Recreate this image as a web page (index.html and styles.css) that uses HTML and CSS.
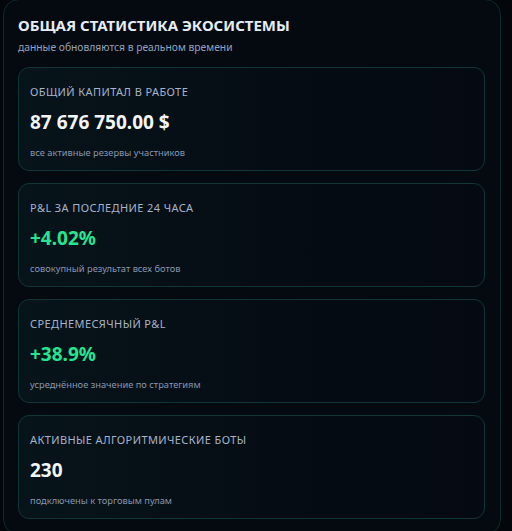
FILE: index.html
```html
<!DOCTYPE html>
<html lang="ru">

<head>
    <meta charset="UTF-8">
    <meta name="viewport" content="width=device-width, initial-scale=1.0">
    <title>Общая статистика экосистемы</title>
    <link rel="stylesheet" href="styles.css">
</head>

<body>
    <!-- Ecosystem stats panel -->
    <div class="stats-box">
        <h1 class="stats-title">ОБЩАЯ СТАТИСТИКА ЭКОСИСТЕМЫ</h1>
        <p class="stats-sub">данные обновляются в реальном времени</p>

        <div class="stats-list">
            <div class="stat-card">
                <div class="stat-label">ОБЩИЙ КАПИТАЛ В РАБОТЕ</div>
                <div class="stat-value">87 676 750.00 $</div>
                <div class="stat-note">все активные резервы участников</div>
            </div>

            <div class="stat-card">
                <div class="stat-label">P&amp;L ЗА ПОСЛЕДНИЕ 24 ЧАСА</div>
                <div class="stat-value positive">+4.02%</div>
                <div class="stat-note">совокупный результат всех ботов</div>
            </div>

            <div class="stat-card">
                <div class="stat-label">СРЕДНЕМЕСЯЧНЫЙ P&amp;L</div>
                <div class="stat-value positive">+38.9%</div>
                <div class="stat-note">усреднённое значение по стратегиям</div>
            </div>

            <div class="stat-card">
                <div class="stat-label">АКТИВНЫЕ АЛГОРИТМИЧЕСКИЕ БОТЫ</div>
                <div class="stat-value">230</div>
                <div class="stat-note">подключены к торговым пулам</div>
            </div>
        </div>
    </div>
</body>

</html>
```

FILE: styles.css
```css
/* Ecosystem stats page */
body {
    margin: 0;
    background: #03060a;
    font-family: 'Noto Sans', 'Open Sans', Arial, sans-serif;
}

.stats-box {
    width: 467px;
    margin: -1px 0 0 3px;
    padding: 14px 15px 15px 14px;
    background: #050a11;
    border: 1px solid #0f2a2c;
    border-radius: 16px;
}

.stats-title {
    margin: 0;
    font-size: 15px;
    line-height: 22px;
    font-weight: 700;
    color: #e4ecf4;
}

.stats-sub {
    margin: 4px 0 0 0;
    font-size: 10.3px;
    line-height: 15px;
    color: #93a2bd;
}

.stats-list {
    display: flex;
    flex-direction: column;
    gap: 12px;
    margin-top: 12px;
}

.stat-card {
    padding: 16px 11px 10px 11px;
    border: 1px solid #0f3634;
    border-radius: 11px;
    background: linear-gradient(90deg, #07141a 0%, #050c14 55%, #050a12 100%);
}

.stat-label {
    font-size: 11px;
    line-height: 15px;
    letter-spacing: 0.4px;
    color: #a6b3cc;
}

.stat-value {
    margin-top: 10px;
    font-size: 19px;
    line-height: 26px;
    font-weight: 700;
    color: #f2f5f8;
}

.stat-value.positive {
    color: #24e692;
}

.stat-note {
    margin-top: 11px;
    font-size: 9.3px;
    line-height: 14px;
    color: #8796b0;
}
```
